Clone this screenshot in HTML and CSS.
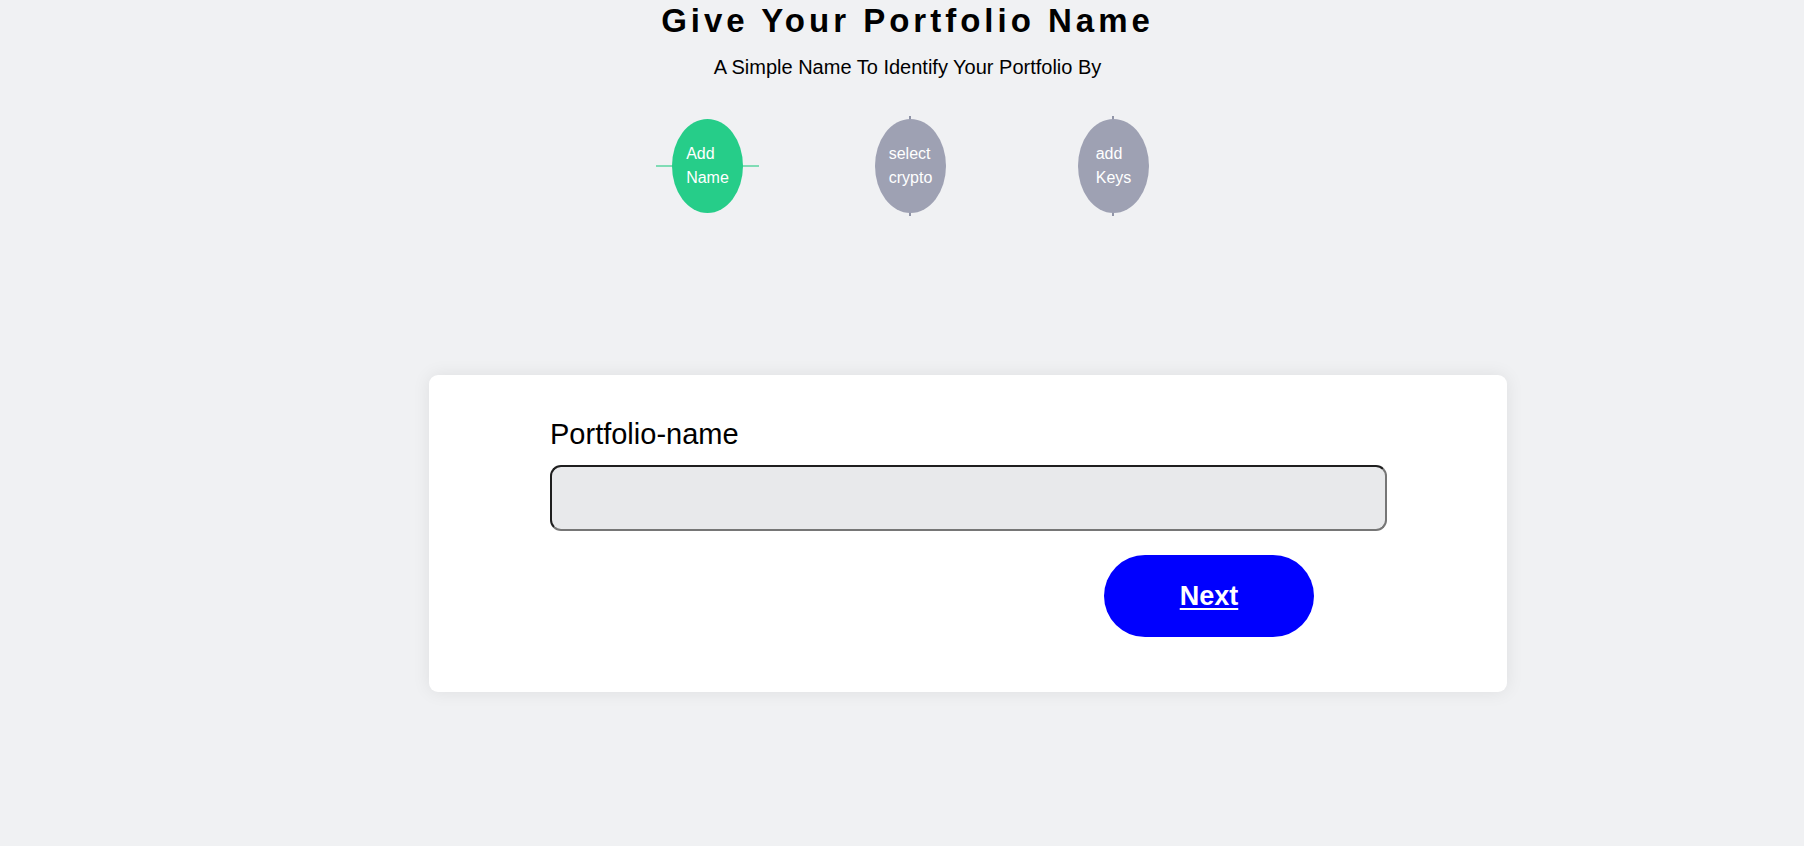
FILE: index.html
```html
<!DOCTYPE html>
<html lang="en">
<head>
<meta charset="utf-8">
<title>Give Your Portfolio Name</title>
<link rel="stylesheet" href="styles.css">
</head>
<body>
<div class="page">
  <header class="header">
    <h1 class="title">Give Your Portfolio Name</h1>
    <p class="subtitle">A Simple Name To Identify Your Portfolio By</p>
  </header>
  <ol class="steps">
    <li class="step step-active"><span class="step-label">Add Name</span></li>
    <li class="step step-todo"><span class="step-label">select crypto</span></li>
    <li class="step step-todo"><span class="step-label">add Keys</span></li>
  </ol>
  <main class="card">
    <label class="field-label" for="pname">Portfolio-name</label>
    <input class="field-input" id="pname" type="text">
    <div class="actions">
      <button class="btn-next" type="button">Next</button>
    </div>
  </main>
</div>
</body>
</html>
```

FILE: styles.css
```css
* { box-sizing: border-box; }
html, body { margin: 0; padding: 0; }
body {
  background: #f0f1f3;
  font-family: "Liberation Sans", Arial, sans-serif;
  color: #000;
  width: 1804px;
  height: 846px;
  overflow: hidden;
}
.page {
  display: flex;
  flex-direction: column;
}
.header {
  display: flex;
  flex-direction: column;
  align-items: center;
  padding-left: 11px;
}
.title {
  margin: 2px 0 0 0;
  font-size: 33px;
  line-height: 38px;
  font-weight: bold;
  letter-spacing: 4px;
}
.subtitle {
  margin: 15px 0 0 0;
  font-size: 20px;
  line-height: 24px;
}
.steps {
  list-style: none;
  margin: 40px 0 0 0;
  padding: 0 0 0 17px;
  display: flex;
  justify-content: center;
  gap: 132px;
}
.step {
  position: relative;
  width: 71px;
  height: 94px;
  display: flex;
  align-items: center;
  justify-content: center;
}
.step::before {
  content: "";
  position: absolute;
  z-index: 0;
}
.step::after {
  content: "";
  position: absolute;
  inset: 0;
  border-radius: 50%;
  z-index: 1;
}
.step-active::before {
  left: -16px;
  right: -16px;
  top: 46px;
  height: 2px;
  background: #80dcb5;
}
.step-active::after { background: #26cd89; }
.step-todo::before {
  top: -3px;
  bottom: -3px;
  left: 34px;
  width: 2px;
  background: #9195a8;
}
.step-todo::after { background: #9ea1b3; }
.step-label {
  position: relative;
  z-index: 2;
  width: min-content;
  color: #fff;
  font-size: 16px;
  line-height: 24px;
}
.card {
  margin: 162px 0 0 429px;
  width: 1078px;
  height: 317px;
  background: #fff;
  border-radius: 9px;
  box-shadow: 0 0 18px rgba(0, 0, 0, 0.08);
  padding: 42px 120px 0 121px;
  display: flex;
  flex-direction: column;
}
.field-label {
  font-size: 29px;
  line-height: 34px;
}
.field-input {
  margin-top: 14px;
  width: 837px;
  height: 66px;
  background: #e8e9eb;
  border: 2px solid;
  border-color: #1e1e1e #767676 #767676 #1e1e1e;
  border-radius: 11px;
  font-size: 20px;
  padding: 0 12px;
  font-family: inherit;
}
.actions {
  margin-top: 24px;
  display: flex;
  justify-content: flex-end;
  padding-right: 73px;
}
.btn-next {
  width: 210px;
  height: 82px;
  border: none;
  border-radius: 41px;
  background: #0000ff;
  color: #fff;
  font-family: inherit;
  font-size: 27px;
  font-weight: bold;
  text-decoration: underline;
  text-underline-offset: 3px;
  text-decoration-thickness: 2px;
  cursor: pointer;
}
```
